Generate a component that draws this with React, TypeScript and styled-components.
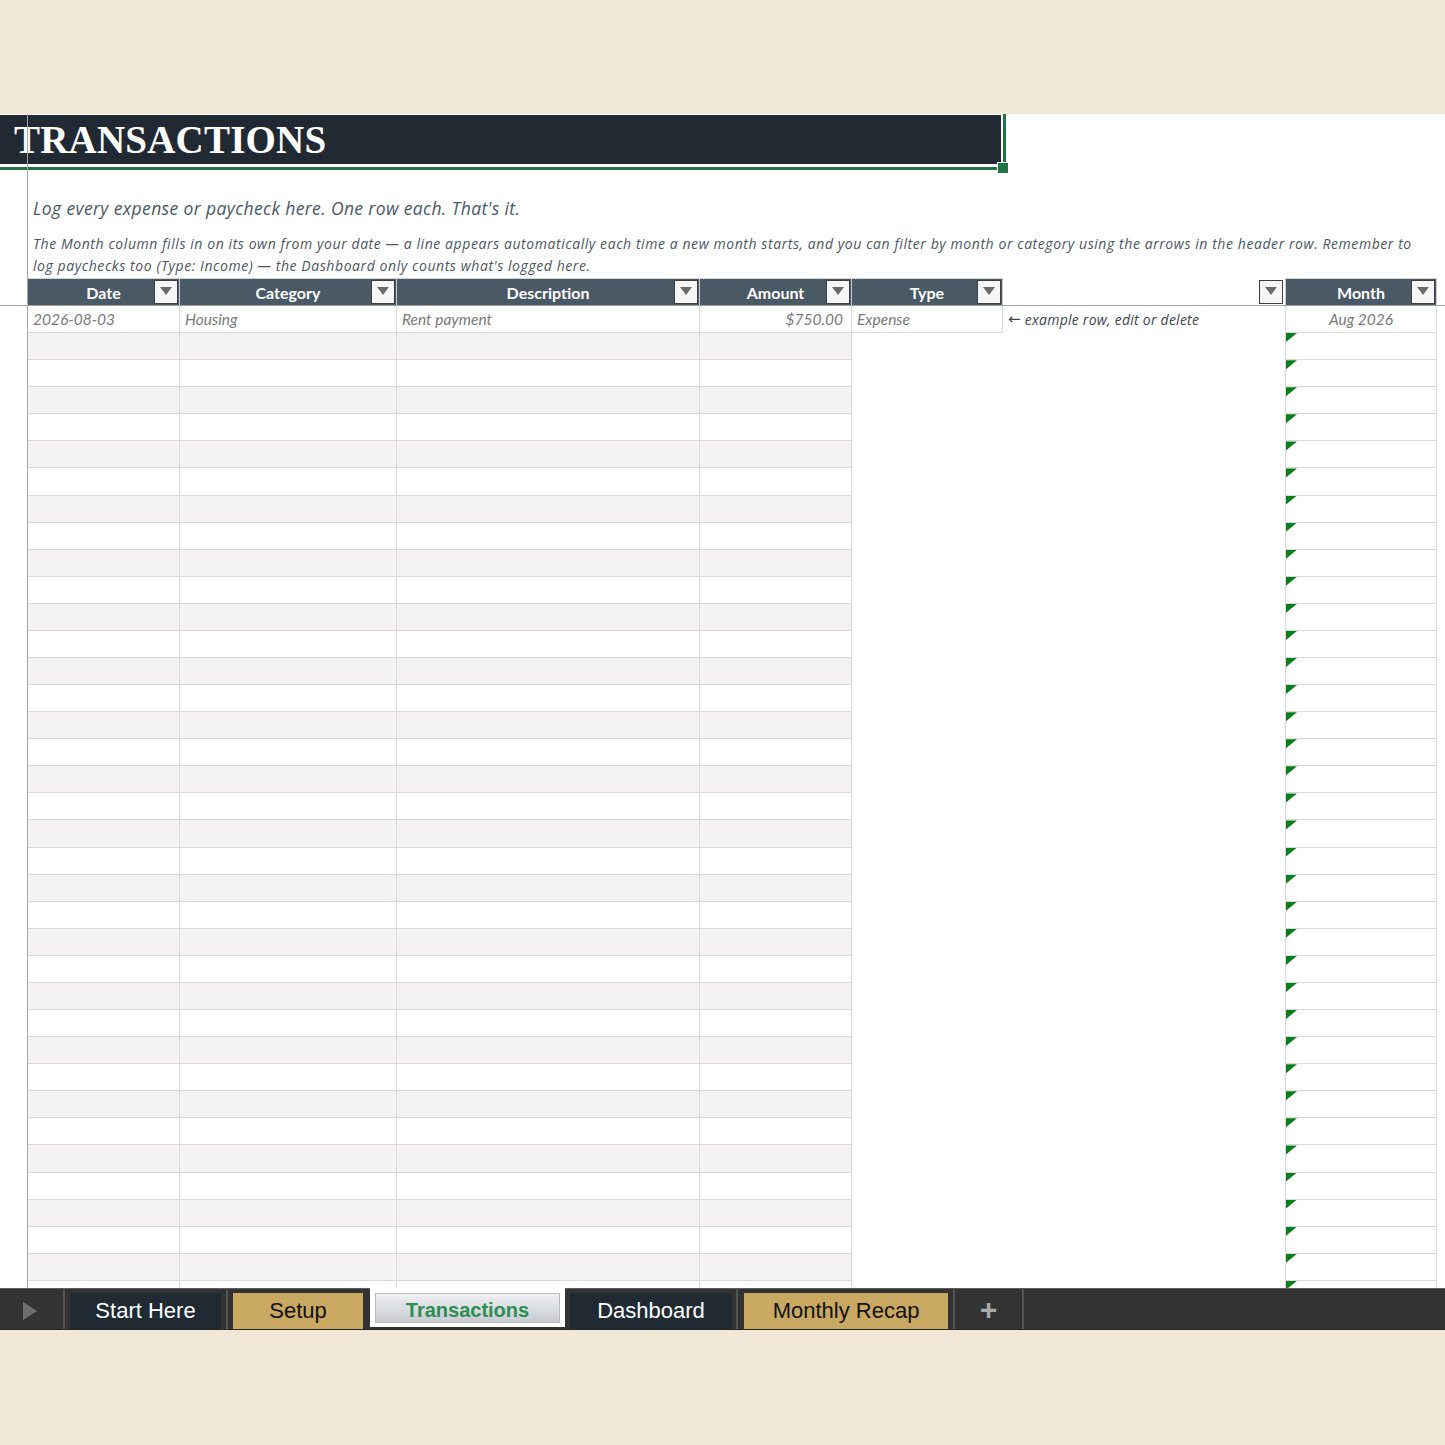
import React from "react";
import styled, { createGlobalStyle } from "styled-components";

const COLS = "28px 152px 217px 303px 152px 151px 282px 152px 1fr";
const ROW_H = 27.08;
const DATA_ROWS = 37;

const GlobalStyle = createGlobalStyle`
  html, body { margin: 0; padding: 0; background: #f0e7d6; }
  body { font-family: Lato, "Open Sans", sans-serif; }
  #root { width: 1445px; }
`;

const Page = styled.div`
  width: 1445px;
  height: 1445px;
  display: flex;
  flex-direction: column;
  background: #f0e7d6;
  overflow: hidden;
`;

const Band = styled.div<{ $h?: number }>`
  flex: ${(p) => (p.$h ? "none" : "1")};
  height: ${(p) => (p.$h ? `${p.$h}px` : "auto")};
  background: #f0e7d6;
`;

const Sheet = styled.div`
  position: relative;
  flex: none;
  height: 1174px;
  background: #ffffff;
  overflow: hidden;
  &::after {
    content: "";
    position: absolute;
    left: 27px;
    top: 0;
    bottom: 0;
    width: 1px;
    background: #a7a7a7;
    z-index: 4;
  }
`;

const TitleRow = styled.div`
  position: relative;
  height: 56px;
`;

const TitleBar = styled.div`
  margin-top: 1px;
  width: 1001px;
  height: 49px;
  background: #212a33;
  display: flex;
  align-items: center;
  padding-left: 14px;
  box-sizing: border-box;
`;

const TitleText = styled.h1`
  margin: 0;
  font-family: "Liberation Serif", "Times New Roman", serif;
  font-weight: 700;
  font-size: 39px;
  letter-spacing: 0.2px;
  line-height: 1;
  color: #ffffff;
`;

const Selection = styled.div`
  position: absolute;
  left: -10px;
  top: -10px;
  width: 1016px;
  height: 65px;
  box-sizing: border-box;
  border: 3px solid #217346;
  pointer-events: none;
  z-index: 2;
`;

const Handle = styled.div`
  position: absolute;
  left: 997px;
  top: 47px;
  width: 10px;
  height: 10px;
  background: #217346;
  border: 1px solid #ffffff;
  z-index: 3;
`;

const Intro = styled.p`
  margin: 0;
  height: 56px;
  box-sizing: border-box;
  padding: 25px 0 0 33px;
  font-family: "Open Sans", sans-serif;
  font-style: italic;
  font-size: 17.5px;
  letter-spacing: 0.38px;
  line-height: 24px;
  color: #4a5866;
  white-space: nowrap;
`;

const Notes = styled.p`
  margin: 0;
  height: 51px;
  box-sizing: border-box;
  padding: 6px 0 0 33px;
  font-family: "Open Sans", sans-serif;
  font-style: italic;
  font-size: 14px;
  letter-spacing: 0.575px;
  line-height: 22px;
  color: #4b5662;
  white-space: nowrap;
`;

const HeaderRow = styled.div`
  display: grid;
  grid-template-columns: ${COLS};
  height: 28px;
  box-sizing: border-box;
  border-bottom: 1px solid #a3a3a3;
`;

type HeadKind = "gutter" | "dark" | "plain";

const HeadCell = styled.div<{ $kind: HeadKind; $left?: boolean }>`
  display: grid;
  grid-template-columns: 26px 1fr 26px;
  align-items: center;
  box-sizing: border-box;
  border-top: 1px solid ${(p) => (p.$kind === "dark" ? "#d0d3d6" : "transparent")};
  border-right: 1px solid ${(p) => (p.$kind === "dark" ? "#c9cdd1" : "transparent")};
  border-left: ${(p) => (p.$left ? "1px solid #d0d0d0" : "none")};
  background: ${(p) => (p.$kind === "dark" ? "#4a5966" : "transparent")};
`;

const HeadLabel = styled.span`
  grid-column: 2;
  text-align: center;
  font-weight: 700;
  font-size: 16px;
  color: #ffffff;
  white-space: nowrap;
`;

const FilterButton = styled.div`
  grid-column: 3;
  justify-self: end;
  width: 24px;
  height: 24px;
  margin-right: 1px;
  box-sizing: border-box;
  border: 1px solid #3e3e3e;
  background: #f6f6f6;
  display: flex;
  align-items: center;
  justify-content: center;
  padding-bottom: 3px;
`;

const DataRow = styled.div`
  display: grid;
  grid-template-columns: ${COLS};
  height: ${ROW_H}px;
`;

type CellKind = "grid" | "blank" | "month";

const Cell = styled.div<{
  $kind: CellKind;
  $striped?: boolean;
  $align?: "left" | "right" | "center";
  $flag?: boolean;
  $note?: boolean;
}>`
  position: relative;
  box-sizing: border-box;
  display: flex;
  align-items: center;
  justify-content: ${(p) =>
    p.$align === "right" ? "flex-end" : p.$align === "center" ? "center" : "flex-start"};
  padding: ${(p) => (p.$align === "right" ? "0 8px 0 5px" : "0 5px")};
  overflow: hidden;
  white-space: nowrap;
  font-family: ${(p) => (p.$note ? '"Open Sans", sans-serif' : "Lato, sans-serif")};
  font-style: italic;
  font-size: ${(p) => (p.$note ? "14px" : "15.5px")};
  letter-spacing: ${(p) => (p.$note ? "0.25px" : "0")};
  color: ${(p) => (p.$note ? "#3c4651" : "#7a7a7a")};
  background: ${(p) => (p.$striped ? "#f4f3f1" : "#ffffff")};
  border-bottom: 1px solid ${(p) => (p.$kind === "blank" ? "transparent" : "#d9d9d9")};
  border-right: 1px solid ${(p) => (p.$kind === "blank" ? "transparent" : "#d9d9d9")};
  border-left: ${(p) => (p.$kind === "month" ? "1px solid #d9d9d9" : "none")};
  &::before {
    content: "";
    display: ${(p) => (p.$flag ? "block" : "none")};
    position: absolute;
    left: 0;
    top: 0;
    width: 11px;
    height: 9px;
    background: #0a7d1d;
    clip-path: polygon(0 0, 100% 0, 0 100%);
  }
`;

const Arrow = styled.span`
  font-family: "DejaVu Sans", sans-serif;
  font-style: normal;
  font-size: 15px;
  margin-right: 4px;
`;

const TabBar = styled.div`
  flex: none;
  height: 42px;
  box-sizing: border-box;
  background: #333333;
  border-top: 1px solid #5e5e5e;
  border-bottom: 1px solid #262626;
  display: flex;
  align-items: flex-start;
  font-family: "Liberation Sans", Arial, sans-serif;
`;

const ArrowCell = styled.div`
  width: 63px;
  height: 100%;
  display: flex;
  align-items: center;
  justify-content: center;
  padding-right: 4px;
  padding-top: 3px;
  box-sizing: border-box;
`;

const Divider = styled.div<{ $ml?: number }>`
  width: 2px;
  height: 100%;
  margin-left: ${(p) => p.$ml ?? 0}px;
  background: #555555;
`;

const Tab = styled.div<{ $w: number; $ml: number; $gold?: boolean }>`
  width: ${(p) => p.$w}px;
  margin-left: ${(p) => p.$ml}px;
  margin-top: 4px;
  height: 36px;
  display: flex;
  align-items: center;
  justify-content: center;
  font-size: 22px;
  color: ${(p) => (p.$gold ? "#121212" : "#ffffff")};
  background: ${(p) => (p.$gold ? "#c9a862" : "#1f2a33")};
  white-space: nowrap;
`;

const ActiveWrap = styled.div`
  width: 195px;
  margin-left: 7px;
  margin-top: -1px;
  height: 39px;
  box-sizing: border-box;
  padding: 5px 5px 4px 5px;
  background: #ffffff;
`;

const ActiveTab = styled.div`
  height: 100%;
  box-sizing: border-box;
  border: 1px solid #b8bcc1;
  background: linear-gradient(#eef0f2, #c8ccd1);
  display: flex;
  align-items: center;
  justify-content: center;
  padding-top: 4px;
  font-size: 20px;
  font-weight: 700;
  color: #2e8d53;
`;

const PlusCell = styled.div`
  width: 67px;
  height: 100%;
  display: flex;
  align-items: center;
  justify-content: center;
  padding-top: 2px;
  box-sizing: border-box;
  font-size: 30px;
  font-weight: 700;
  color: #a9a9a9;
  line-height: 1;
`;

const Triangle = () => (
  <svg width="12" height="8" viewBox="0 0 12 8">
    <polygon points="0,0 12,0 6,8" fill="#6b6b6b" />
  </svg>
);

const heads: { label?: string; kind: HeadKind; filter?: boolean; left?: boolean }[] = [
  { kind: "gutter" },
  { label: "Date", kind: "dark", filter: true },
  { label: "Category", kind: "dark", filter: true },
  { label: "Description", kind: "dark", filter: true },
  { label: "Amount", kind: "dark", filter: true },
  { label: "Type", kind: "dark", filter: true },
  { kind: "plain", filter: true },
  { label: "Month", kind: "dark", filter: true, left: true },
  { kind: "gutter" },
];

export default function App() {
  const rows = Array.from({ length: DATA_ROWS - 1 }, (_, i) => i + 1);
  return (
    <Page>
      <GlobalStyle />
      <Band $h={114} />
      <Sheet>
        <TitleRow>
          <TitleBar>
            <TitleText>TRANSACTIONS</TitleText>
          </TitleBar>
          <Selection />
          <Handle />
        </TitleRow>
        <Intro>Log every expense or paycheck here. One row each. That's it.</Intro>
        <Notes>
          The Month column fills in on its own from your date — a line appears automatically each time a new month starts, and you can filter by month or category using the arrows in the header row. Remember to
          <br />
          log paychecks too (Type: Income) — the Dashboard only counts what's logged here.
        </Notes>
        <HeaderRow>
          {heads.map((h, i) => (
            <HeadCell key={i} $kind={h.kind} $left={h.left}>
              {h.label && <HeadLabel>{h.label}</HeadLabel>}
              {h.filter && (
                <FilterButton>
                  <Triangle />
                </FilterButton>
              )}
            </HeadCell>
          ))}
        </HeaderRow>
        <DataRow>
          <Cell $kind="blank" />
          <Cell $kind="grid">2026-08-03</Cell>
          <Cell $kind="grid">Housing</Cell>
          <Cell $kind="grid">Rent payment</Cell>
          <Cell $kind="grid" $align="right">$750.00</Cell>
          <Cell $kind="grid">Expense</Cell>
          <Cell $kind="blank" $note>
            <Arrow>←</Arrow>example row, edit or delete
          </Cell>
          <Cell $kind="month" $align="center">Aug 2026</Cell>
          <Cell $kind="blank" />
        </DataRow>
        {rows.map((r) => {
          const striped = r % 2 === 1;
          return (
            <DataRow key={r}>
              <Cell $kind="blank" />
              <Cell $kind="grid" $striped={striped} />
              <Cell $kind="grid" $striped={striped} />
              <Cell $kind="grid" $striped={striped} />
              <Cell $kind="grid" $striped={striped} />
              <Cell $kind="blank" />
              <Cell $kind="blank" />
              <Cell $kind="month" $flag />
              <Cell $kind="blank" />
            </DataRow>
          );
        })}
      </Sheet>
      <TabBar>
        <ArrowCell>
          <svg width="14" height="18" viewBox="0 0 14 18">
            <polygon points="0,0 14,9 0,18" fill="#6f6f6f" />
          </svg>
        </ArrowCell>
        <Divider />
        <Tab $w={151} $ml={5}>Start Here</Tab>
        <Divider $ml={5} />
        <Tab $w={130} $ml={5} $gold>Setup</Tab>
        <ActiveWrap>
          <ActiveTab>Transactions</ActiveTab>
        </ActiveWrap>
        <Tab $w={162} $ml={5}>Dashboard</Tab>
        <Divider $ml={4} />
        <Tab $w={204} $ml={6} $gold>Monthly Recap</Tab>
        <Divider $ml={5} />
        <PlusCell>+</PlusCell>
        <Divider />
      </TabBar>
      <Band />
    </Page>
  );
}
